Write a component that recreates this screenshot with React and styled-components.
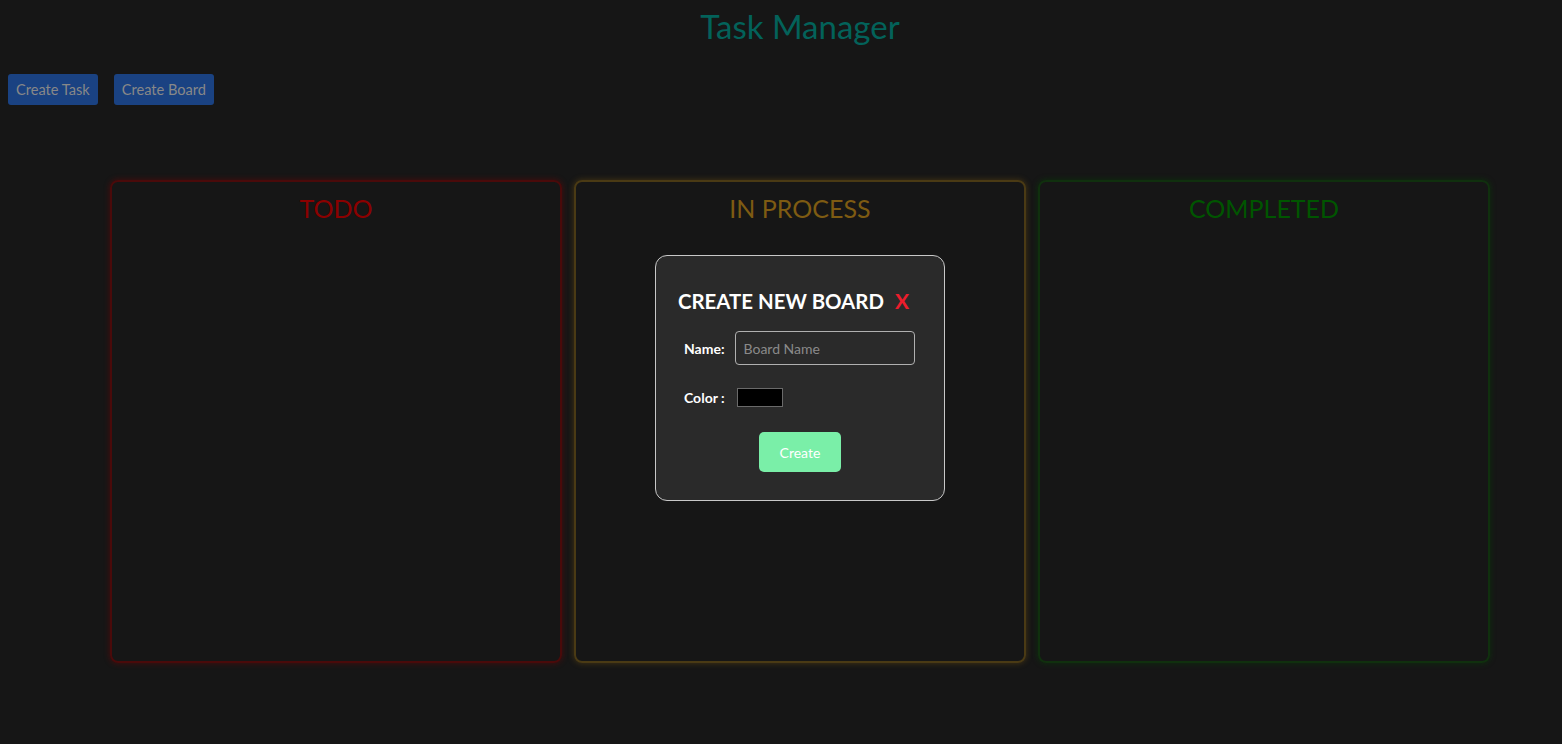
import React from "react";
import styled, { createGlobalStyle } from "styled-components";

const Global = createGlobalStyle`
  html, body {
    margin: 0;
    padding: 0;
    background: #161616;
    overflow: hidden;
  }
  body {
    font-family: Lato, "Open Sans", sans-serif;
  }
  * { box-sizing: border-box; }
`;

const Page = styled.div`
  width: 1600px;
  min-height: 744px;
  padding: 0 8px;
  background: #161616;
`;

const Title = styled.h1`
  margin: 0;
  padding-top: 6px;
  text-align: center;
  font-size: 33px;
  font-weight: 400;
  color: #03625a;
  line-height: 40px;
`;

const Toolbar = styled.div`
  display: flex;
  gap: 16px;
  margin-top: 28px;
`;

const ToolButton = styled.button`
  height: 31px;
  padding: 0 8px;
  border: none;
  border-radius: 3px;
  background: #1a4282;
  color: #888888;
  font-family: inherit;
  font-size: 14.6px;
`;

const Columns = styled.div`
  display: grid;
  grid-template-columns: repeat(3, 452px);
  gap: 12px;
  justify-content: center;
  margin-top: 75px;
`;

const Column = styled.section`
  height: 483px;
  border: 2px solid ${(p) => p.$color};
  border-radius: 8px;
  box-shadow: 0 0 6px ${(p) => p.$glow};
  text-align: center;
`;

const ColumnTitle = styled.h2`
  margin: 10px 0 0;
  font-size: 25px;
  font-weight: 400;
  line-height: 32px;
  color: ${(p) => p.$color};
`;

const Modal = styled.div`
  position: fixed;
  top: 255px;
  left: 655px;
  width: 290px;
  height: 246px;
  background: #2a2a2a;
  border: 1px solid #c8c8c8;
  border-radius: 12px;
  padding: 30px 22px 0 22px;
  color: #ffffff;
`;

const ModalHeader = styled.div`
  display: flex;
  align-items: center;
  gap: 11px;
`;

const ModalTitle = styled.h3`
  margin: 0;
  font-size: 20.4px;
  font-weight: 700;
  line-height: 30px;
  color: #ffffff;
`;

const Close = styled.span`
  font-size: 21px;
  font-weight: 700;
  color: #ec1d2c;
  line-height: 30px;
`;

const Field = styled.div`
  display: flex;
  align-items: center;
  gap: ${(p) => p.$gap}px;
  padding-left: 6px;
  margin-top: ${(p) => p.$top}px;
`;

const Label = styled.label`
  font-size: 14px;
  font-weight: 700;
  color: #ffffff;
`;

const Input = styled.input`
  width: 180px;
  height: 34px;
  background: transparent;
  border: 1px solid #b0b0b0;
  border-radius: 4px;
  padding: 0 8px;
  font-family: inherit;
  font-size: 14px;
  color: #ffffff;
  outline: none;
  &::placeholder { color: #8a8a8a; }
`;

const Swatch = styled.div`
  width: 46px;
  height: 19px;
  background: #000000;
  border: 1px solid #6a6a6a;
`;

const Actions = styled.div`
  display: flex;
  justify-content: center;
  margin-top: 25px;
`;

const CreateButton = styled.button`
  width: 82px;
  height: 40px;
  border: none;
  border-radius: 5px;
  background: #7aefa8;
  color: #ffffff;
  font-family: inherit;
  font-size: 14px;
`;

const columns = [
  { title: "TODO", color: "#8b0000", border: "#4a0a0a", glow: "rgba(140,0,0,0.45)" },
  { title: "IN PROCESS", color: "#7e5b12", border: "#4a3a14", glow: "rgba(130,95,20,0.45)" },
  { title: "COMPLETED", color: "#005500", border: "#10300e", glow: "rgba(0,80,0,0.45)" },
];

export default function App() {
  return (
    <Page>
      <Global />
      <Title>Task Manager</Title>
      <Toolbar>
        <ToolButton>Create Task</ToolButton>
        <ToolButton>Create Board</ToolButton>
      </Toolbar>
      <Columns>
        {columns.map((c) => (
          <Column key={c.title} $color={c.border} $glow={c.glow}>
            <ColumnTitle $color={c.color}>{c.title}</ColumnTitle>
          </Column>
        ))}
      </Columns>
      <Modal>
        <ModalHeader>
          <ModalTitle>CREATE NEW BOARD</ModalTitle>
          <Close>X</Close>
        </ModalHeader>
        <Field $gap={10} $top={15}>
          <Label>Name:</Label>
          <Input placeholder="Board Name" />
        </Field>
        <Field $gap={12} $top={23}>
          <Label>Color :</Label>
          <Swatch />
        </Field>
        <Actions>
          <CreateButton>Create</CreateButton>
        </Actions>
      </Modal>
    </Page>
  );
}
